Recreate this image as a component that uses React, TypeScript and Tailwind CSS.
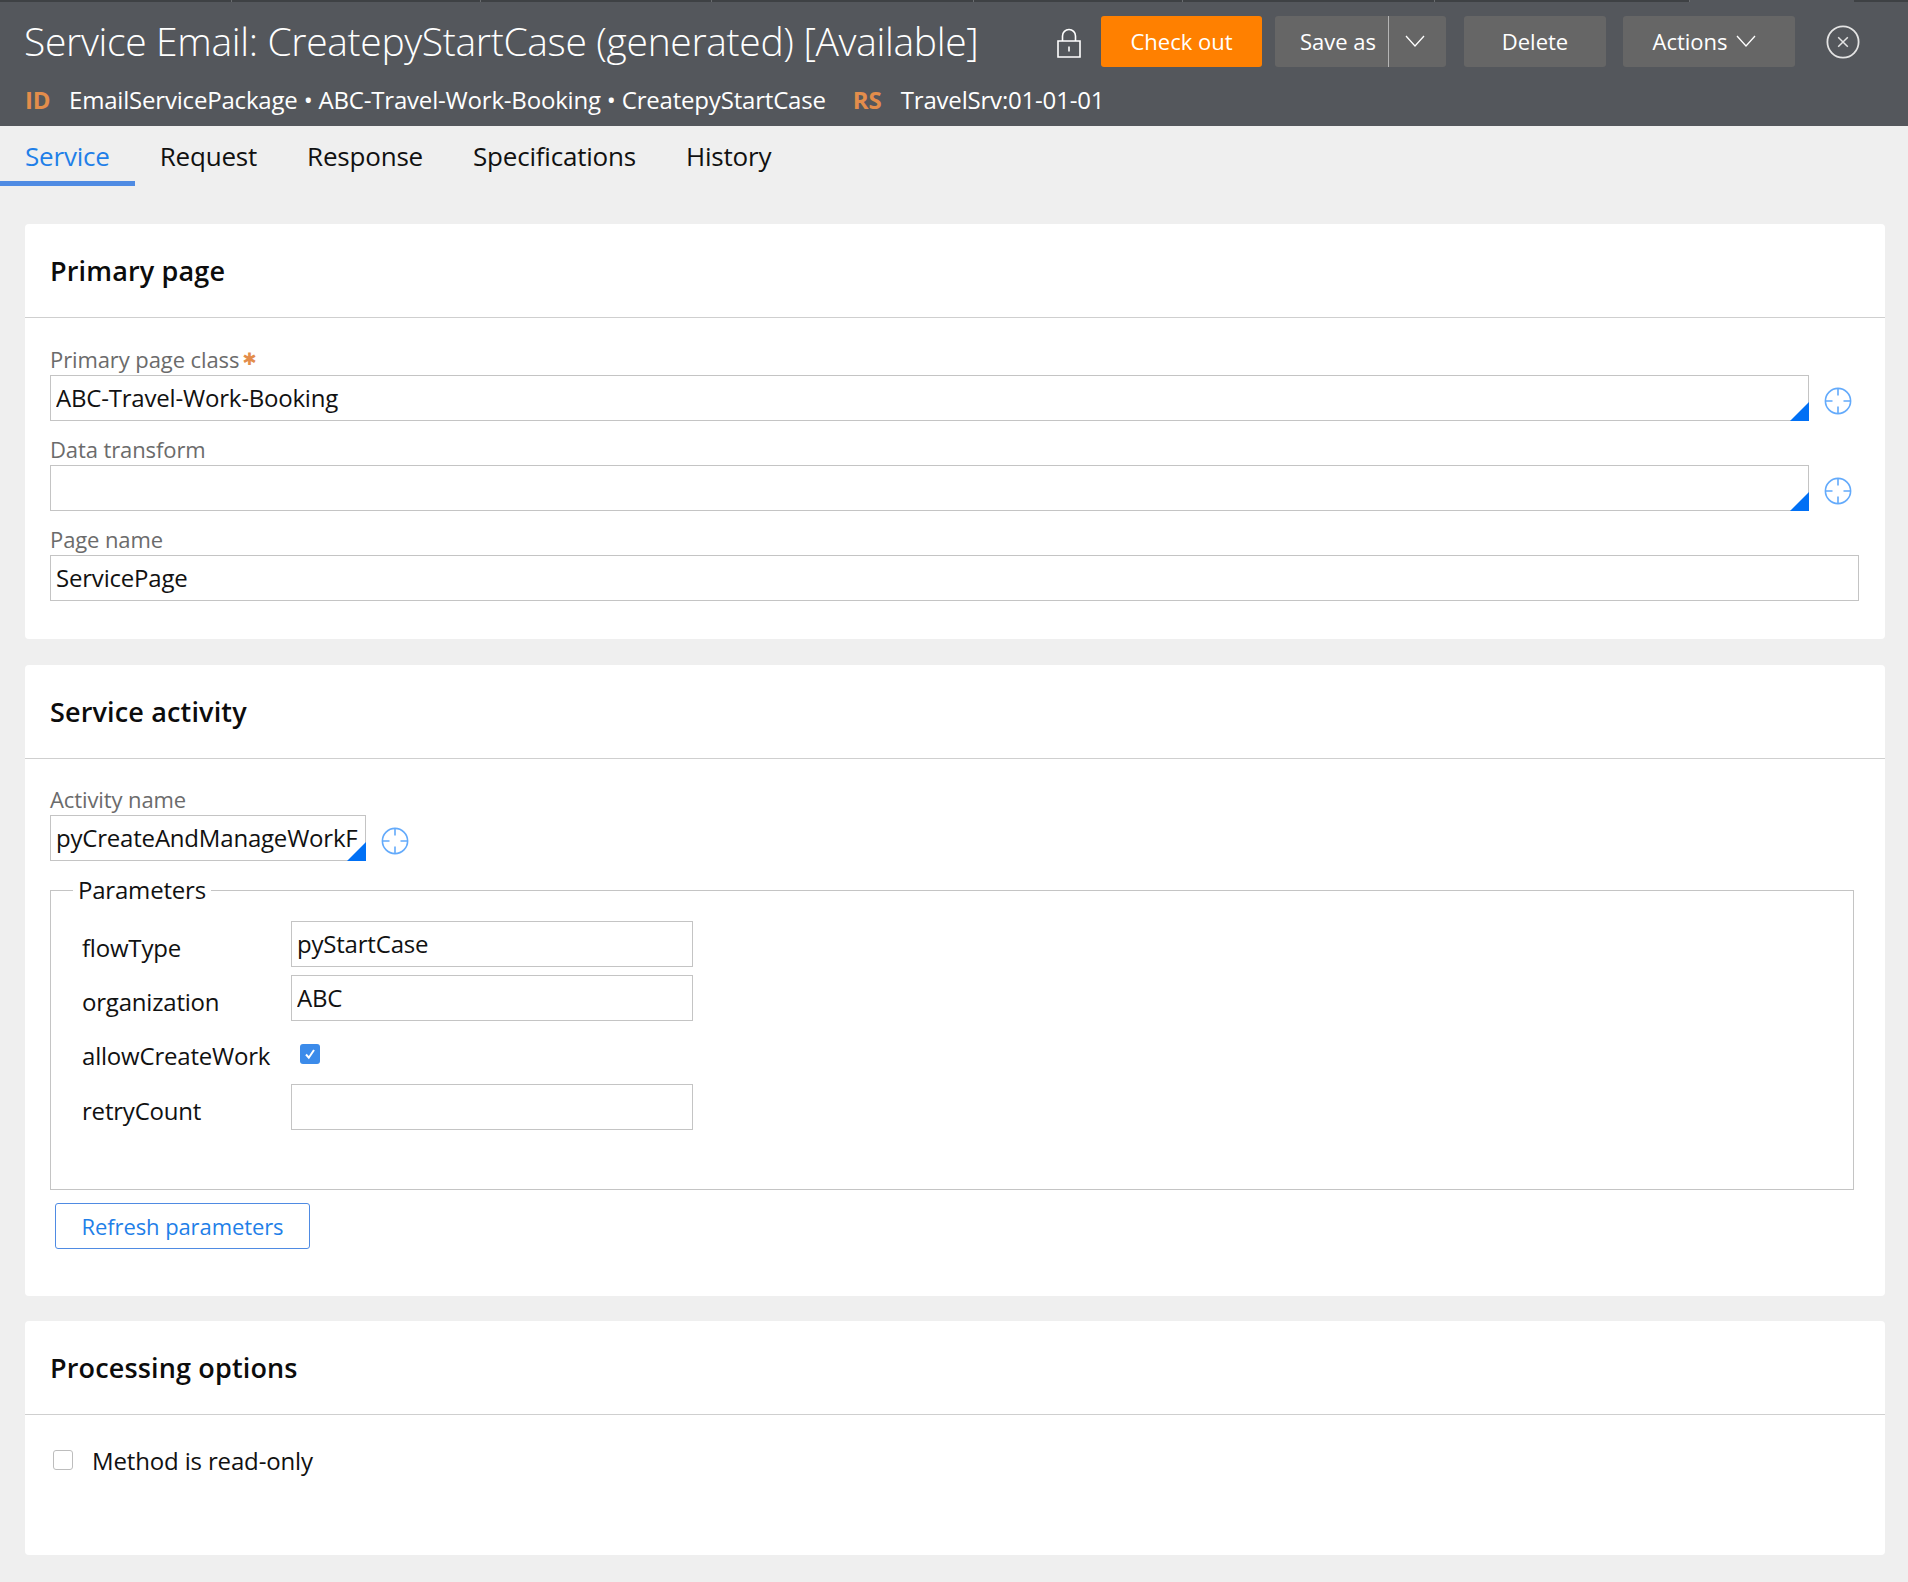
const font = "font-['Open_Sans',sans-serif]";

function Crosshair() {
  return (
    <svg width="28" height="28" viewBox="0 0 28 28" fill="none" stroke="#63aafb" strokeWidth="1.6" className="shrink-0">
      <circle cx="14" cy="14" r="12.6" />
      <path d="M14 1.5v7M14 19.5v7M1.5 14h7M19.5 14h7" />
    </svg>
  );
}

function Chevron() {
  return (
    <svg width="20" height="12" viewBox="0 0 20 12" fill="none" stroke="#fff" strokeWidth="1.3">
      <path d="M1 1l9 10 9-10" />
    </svg>
  );
}

function LockIcon() {
  return (
    <svg width="24" height="30" viewBox="0 0 24 30" fill="none" stroke="#fff" strokeWidth="1.6">
      <path d="M5.5 13V8a6.5 6.5 0 0 1 13 0v5" />
      <path d="M1 13h22v16H1z" />
      <path d="M12 18.5v5" />
    </svg>
  );
}

function CloseIcon() {
  return (
    <svg width="34" height="34" viewBox="0 0 34 34" fill="none" stroke="#e4e4e4" strokeWidth="1.8">
      <circle cx="17" cy="17" r="15.6" />
      <path d="M12.2 12.2l9.6 9.6M21.8 12.2l-9.6 9.6" strokeWidth="1.5" />
    </svg>
  );
}

function TextField({ value, picker, className }: { value: string; picker?: boolean; className?: string }) {
  return (
    <div className={`relative h-[46px] ${className ?? ""}`}>
      <input
        readOnly
        value={value}
        className={`h-full w-full border border-[#c4c4c4] bg-white pb-[2px] pl-[5px] text-[24px] tracking-[-0.2px] text-[#111] outline-none ${picker ? "pr-[7px]" : ""}`}
      />
      {picker ? (
        <span className="absolute bottom-0 right-0 h-[19px] w-[19px] bg-[#0070f5] [clip-path:polygon(100%_0,100%_100%,0_100%)]" />
      ) : null}
    </div>
  );
}

function FieldLabel({ children }: { children: React.ReactNode }) {
  return <div className="flex h-[28px] text-[22px] leading-[25px] tracking-[-0.1px] text-[#6b6b6b]">{children}</div>;
}

function PickerRow({ value, className }: { value: string; className?: string }) {
  return (
    <div className="flex items-center">
      <TextField value={value} picker className={className} />
      <span className="ml-[15px] mt-[6px]">
        <Crosshair />
      </span>
    </div>
  );
}

function Card({ title, className, children }: { title: string; className: string; children: React.ReactNode }) {
  return (
    <section className={`rounded-[4px] bg-white ${className}`}>
      <h2 className="flex h-[93px] items-center pl-[25px] pt-[2px] text-[27px] font-semibold tracking-[0.15px] text-[#0c0c0c]">{title}</h2>
      <div className="h-[1px] bg-[#cfcfcf]" />
      {children}
    </section>
  );
}

function ParamRow({ label, children }: { label: string; children: React.ReactNode }) {
  return (
    <div className="flex h-[46px] items-center">
      <div className="w-[240px] shrink-0 pl-[31px] pt-[7px] text-[24px] tracking-[-0.2px] text-[#111]">{label}</div>
      {children}
    </div>
  );
}

const tabs = ["Service", "Request", "Response", "Specifications", "History"];
const strip = [232, 249, 231, 262, 209, 252, 255, 164, 54];

export default function App() {
  return (
    <div className={`${font} min-h-[1582px] bg-[#efefef]`}>
      <div className="flex h-[2px] bg-[#3e4144]">
        {strip.map((width, i) => (
          <div
            key={i}
            style={{ width }}
            className={i === 7 ? "bg-[#54575c]" : "border-r border-[#6a6d70] last:border-0"}
          />
        ))}
      </div>
      <header className="h-[124px] bg-[#54575c] text-white">
        <div className="flex h-[80px] items-center pl-[24px]">
          <h1 className="w-[1023px] shrink-0 pb-[2px] text-[39px] font-light tracking-[-0.33px] text-white">
            Service Email: CreatepyStartCase (generated) [Available]
          </h1>
          <div className="flex w-[54px] justify-center pr-[10px] pt-[2px]">
            <LockIcon />
          </div>
          <div className="mb-[2px] flex h-[51px] text-[22px]">
            <button className="mr-[13px] w-[161px] rounded-[3px] bg-[#ff8000]">Check out</button>
            <div className="mr-[18px] flex w-[171px] rounded-[3px] bg-[#666666]">
              <button className="w-[114px] border-r border-[#b5b5b5] pl-[13px]">Save as</button>
              <button className="flex flex-1 items-center justify-center pr-[6px]">
                <Chevron />
              </button>
            </div>
            <button className="mr-[17px] w-[142px] rounded-[3px] bg-[#666666]">Delete</button>
            <button className="flex w-[172px] items-center justify-center gap-[8px] rounded-[3px] bg-[#666666] pr-[10px]">
              Actions
              <Chevron />
            </button>
          </div>
          <span className="ml-[31px]">
            <CloseIcon />
          </span>
        </div>
        <div className="flex h-[40px] items-center pb-[4px] pl-[25px] text-[24px] tracking-[-0.19px]">
          <span className="w-[44px] font-bold text-[#e38d4b]">ID</span>
          <span>EmailServicePackage • ABC-Travel-Work-Booking • CreatepyStartCase</span>
          <span className="ml-[27px] w-[48px] font-bold text-[#e38d4b]">RS</span>
          <span>TravelSrv:01-01-01</span>
        </div>
      </header>

      <nav className="flex h-[60px]">
        {tabs.map((tab, i) => (
          <div
            key={tab}
            className={`flex items-center border-b-[5px] px-[25px] pt-[5px] text-[26px] tracking-[-0.2px] ${
              i === 0 ? "border-[#4f8be3] text-[#1f7fe8]" : "border-transparent text-[#111]"
            }`}
          >
            {tab}
          </div>
        ))}
      </nav>

      <main className="pl-[25px] pr-[23px] pt-[38px]">
        <Card title="Primary page" className="h-[415px]">
          <div className="px-[25px] pt-[29px]">
            <FieldLabel>
              Primary page class
              <span className="ml-[3px] font-['DejaVu_Sans',sans-serif] text-[17px] font-bold text-[#e38d4b]">✱</span>
            </FieldLabel>
            <PickerRow value="ABC-Travel-Work-Booking" className="w-[1759px]" />
            <div className="mt-[16px]">
              <FieldLabel>Data transform</FieldLabel>
            </div>
            <PickerRow value="" className="w-[1759px]" />
            <div className="mt-[16px]">
              <FieldLabel>Page name</FieldLabel>
            </div>
            <TextField value="ServicePage" className="w-[1809px]" />
          </div>
        </Card>

        <Card title="Service activity" className="mt-[26px] h-[631px]">
          <div className="px-[25px] pt-[28px]">
            <FieldLabel>Activity name</FieldLabel>
            <PickerRow value="pyCreateAndManageWorkFlow" className="w-[316px]" />
            <fieldset className="mt-[13px] h-[316px] w-[1804px] border border-[#c4c4c4]">
              <legend className="ml-[22px] px-[5px] text-[24px] leading-[32px] tracking-[-0.2px] text-[#111]">Parameters</legend>
              <div className="mt-[15px] flex flex-col gap-[8px]">
                <ParamRow label="flowType">
                  <TextField value="pyStartCase" className="w-[402px]" />
                </ParamRow>
                <ParamRow label="organization">
                  <TextField value="ABC" className="w-[402px]" />
                </ParamRow>
                <ParamRow label="allowCreateWork">
                  <span className="ml-[9px] mt-[3px] flex h-[20px] w-[20px] items-center justify-center rounded-[3px] bg-[#3b8bea]">
                    <svg width="14" height="14" viewBox="0 0 14 14" fill="none" stroke="#fff" strokeWidth="2">
                      <path d="M3 7.5l2.8 3.2L11 3" />
                    </svg>
                  </span>
                </ParamRow>
                <div className="mt-[1px]">
                  <ParamRow label="retryCount">
                    <TextField value="" className="w-[402px]" />
                  </ParamRow>
                </div>
              </div>
            </fieldset>
            <button className="ml-[5px] mt-[13px] h-[46px] w-[255px] rounded-[3px] border border-[#4f8be3] text-[22px] tracking-[-0.1px] text-[#1f7fe8]">
              Refresh parameters
            </button>
          </div>
        </Card>

        <Card title="Processing options" className="mt-[25px] h-[234px]">
          <div className="flex items-center pl-[28px] pt-[26px]">
            <span className="h-[20px] w-[20px] rounded-[3px] border border-[#bdbdbd] bg-white" />
            <span className="ml-[19px] pt-[2px] text-[24px] tracking-[-0.15px] text-[#111]">Method is read-only</span>
          </div>
        </Card>
      </main>
    </div>
  );
}
